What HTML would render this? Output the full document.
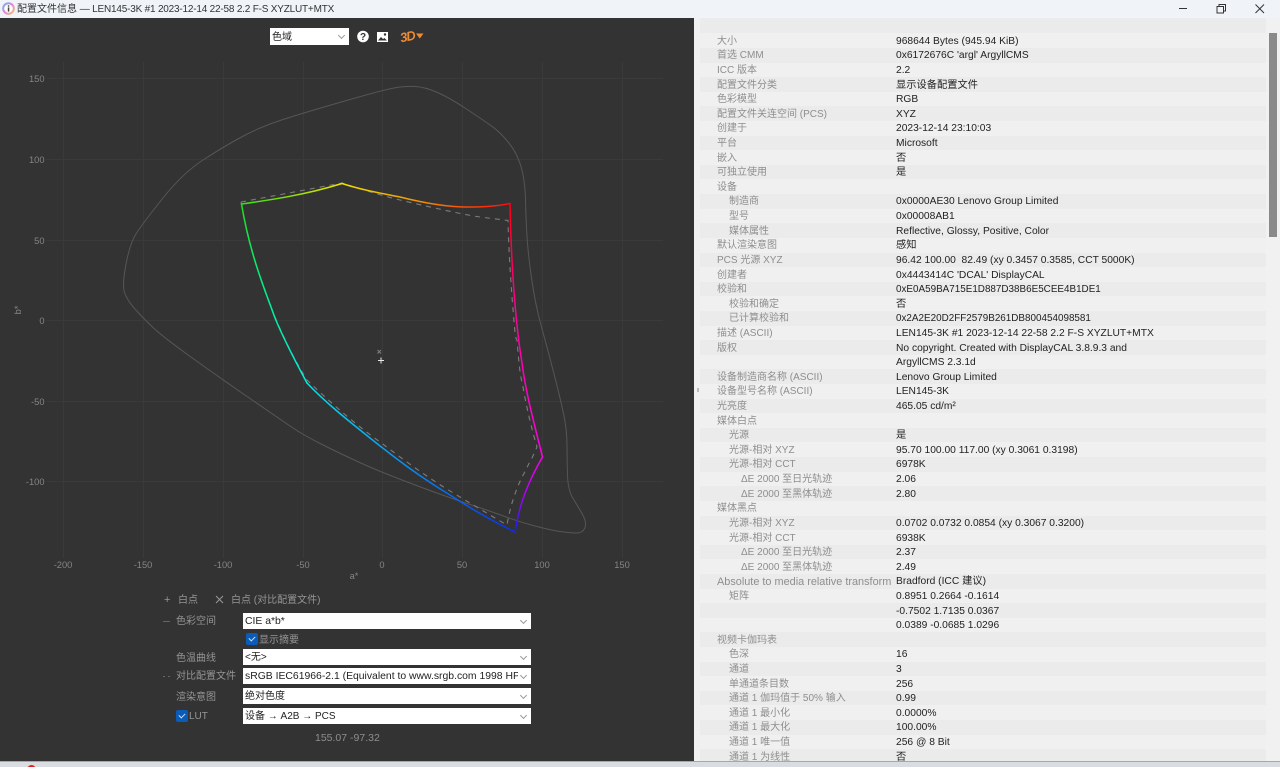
<!DOCTYPE html>
<html lang="zh">
<head>
<meta charset="utf-8">
<title>配置文件信息</title>
<style>
html,body{margin:0;padding:0;width:1280px;height:767px;overflow:hidden}
body{position:relative;background:#f1f1f1;font-family:"Liberation Sans","Noto Sans CJK SC",sans-serif;font-size:10px}
.a{position:absolute;white-space:nowrap}
#title{left:0;top:0;width:1280px;height:18px;background:#f0f4f9}
#left{left:0;top:18px;width:694px;height:743px;background:#333}
#task{left:0;top:761px;width:1280px;height:6px;background:#d9dde2;border-top:1px solid #a8a8a8;box-sizing:border-box;overflow:hidden}
#rows{position:absolute;left:700px;top:33.4px;width:566px}
.r{height:14.62px;line-height:14.62px;position:relative;white-space:nowrap}
.r:nth-child(even){background:#ebebeb}
.r:nth-child(odd){background:#f0f0f0}
.r b{font-weight:normal;position:absolute;left:17px;top:1.4px;color:#8e8e8e;font-size:10px}
.r b.i1{left:29px}
.r b.i2{left:41px}
.r i{font-style:normal;position:absolute;left:196px;top:1.4px;color:#222;font-size:10.25px}
.s{background:#fff;color:#222;height:16px;line-height:17px;left:243px;width:288px;padding-left:2px;box-sizing:border-box;overflow:hidden;font-size:10.4px}
.s:after{content:"";position:absolute;right:5px;top:5px;width:4px;height:4px;border-right:1px solid #999;border-bottom:1px solid #999;transform:rotate(45deg)}
.s span{position:absolute;left:2px;right:13px;top:0;overflow:hidden}
.z{font-size:10px}
.s.z{line-height:18px}
.l{color:#959595;line-height:14px;font-size:10px}
.c{width:12px;height:12px;background:#0a5cb8;border-radius:2px}
.c:after{content:"";position:absolute;left:3px;top:2.500px;width:5px;height:3px;border-left:1px solid #cfe2f8;border-bottom:1px solid #cfe2f8;transform:rotate(-45deg)}
</style>
</head>
<body>
<div class="a" id="title"></div>
<svg class="a" style="left:2px;top:2px" width="13" height="13" viewBox="0 0 13 13">
<defs><linearGradient id="ic" x1="0" y1="0" x2="1" y2="1"><stop offset="0" stop-color="#5fb8f0"/><stop offset=".5" stop-color="#e884d0"/><stop offset="1" stop-color="#f0d060"/></linearGradient></defs>
<circle cx="6.5" cy="6.5" r="6.3" fill="url(#ic)"/><circle cx="6.5" cy="6.5" r="4.3" fill="#fff"/>
<rect x="5.8" y="5.4" width="1.5" height="4.2" fill="#444"/><rect x="5.8" y="3.3" width="1.5" height="1.4" fill="#444"/></svg>
<div class="a" style="left:17px;top:2px;line-height:15px;color:#333;font-size:10px">配置文件信息 <span style="letter-spacing:-.2px">— LEN145-3K #1 2023-12-14 22-58 2.2 F-S XYZLUT+MTX</span></div>
<svg class="a" style="left:1176px;top:0" width="104" height="18" viewBox="0 0 104 18" fill="none" stroke="#333" stroke-width="1">
<path d="M3 8.500h8"/><path d="M41 6.500h6.500v6.500H41z"/><path d="M43 6.500V4.500h6.500V11h-2"/><path d="M79.500 4.500l8.500 8.500M88 4.500l-8.500 8.500"/></svg>

<div class="a" id="left"></div>

<svg class="a" style="left:0;top:18px" width="694" height="600" viewBox="0 18 694 600" font-family="Liberation Sans" font-size="9.3" fill="#858585">
<defs>
<linearGradient id="g1" gradientUnits="userSpaceOnUse" x1="241" y1="204" x2="342" y2="183"><stop offset="0" stop-color="#30e010"/><stop offset="1" stop-color="#f0e000"/></linearGradient>
<linearGradient id="g2" gradientUnits="userSpaceOnUse" x1="342" y1="183" x2="510" y2="204"><stop offset="0" stop-color="#f0e000"/><stop offset=".4" stop-color="#f0a000"/><stop offset="1" stop-color="#ff0a10"/></linearGradient>
<linearGradient id="g3" gradientUnits="userSpaceOnUse" x1="510" y1="204" x2="542" y2="457"><stop offset="0" stop-color="#ff0010"/><stop offset=".4" stop-color="#ff0090"/><stop offset="1" stop-color="#ff00e8"/></linearGradient>
<linearGradient id="g4" gradientUnits="userSpaceOnUse" x1="542" y1="457" x2="514" y2="532"><stop offset="0" stop-color="#ff00e8"/><stop offset=".55" stop-color="#a800ff"/><stop offset="1" stop-color="#1020f0"/></linearGradient>
<linearGradient id="g5" gradientUnits="userSpaceOnUse" x1="514" y1="532" x2="305" y2="382"><stop offset="0" stop-color="#0830f0"/><stop offset=".5" stop-color="#0890f0"/><stop offset="1" stop-color="#00e8f0"/></linearGradient>
<linearGradient id="g6" gradientUnits="userSpaceOnUse" x1="305" y1="382" x2="241" y2="204"><stop offset="0" stop-color="#00f0e0"/><stop offset=".5" stop-color="#00f090"/><stop offset="1" stop-color="#20e020"/></linearGradient>
</defs>
<g stroke="#3a3a3a" stroke-width="1" fill="none">
<path d="M63.500 62V558M143.500 62V558M223.500 62V558M303.500 62V558M382.500 62V558M462.500 62V558M542.500 62V558M622.500 62V558"/>
<path d="M46 78.500H663M46 159.500H663M46 240.500H663M46 320.500H663M46 401.500H663M46 481.500H663"/>
</g>
<g text-anchor="end">
<text x="44.500" y="82">150</text><text x="44.500" y="163">100</text><text x="44.500" y="244">50</text><text x="44.500" y="324">0</text><text x="44.500" y="405">-50</text><text x="44.500" y="485">-100</text>
</g>
<g text-anchor="middle">
<text x="63" y="568">-200</text><text x="143" y="568">-150</text><text x="223" y="568">-100</text><text x="303" y="568">-50</text><text x="382" y="568">0</text><text x="462" y="568">50</text><text x="542" y="568">100</text><text x="622" y="568">150</text>
<text x="354" y="579">a*</text>
<text transform="translate(21 310) rotate(-90)">b*</text>
</g>
<path fill="none" stroke="#565656" stroke-width="1" d="M124.500 292.500Q122 285 126 264Q130 243 136.500 233Q143 223 163 198Q183 173 203 160Q223 147 241.500 137Q260 127 281.500 120Q303 113 343 101.500Q383 90 394 88Q405 86 415 86.500Q425 87 437.500 92.500Q450 98 466.500 109Q483 120 491.500 126Q500 132 508.500 142.500Q517 153 521 166.500Q525 180 525.500 200Q526 220 527 236.500Q528 253 531.500 278Q535 303 541 325Q547 347 553.500 372Q560 397 563.500 413.500Q567 430 567 445Q567 460 567.500 475Q568 490 572.500 497.500Q577 505 582 513.500Q587 522 585 527.500Q583 533 576.500 533Q570 533 560 531.500Q550 530 535 526Q520 522 503.500 516Q487 510 468.500 504Q450 498 416.500 485.500Q383 473 363 464Q343 455 323 445Q303 435 290 426Q277 417 250 398.500Q223 380 193 358.500Q163 337 153 327.500Q143 318 135 309Q127 300 124.500 292.500Z"/>
<path fill="none" stroke="#7c7c7c" stroke-width="1.100" stroke-dasharray="5 5" d="M241 202L342 183C360 189 380 195 400 200C425 206 465 215 480 217L508 220.500C508.500 240 509 255 512 297C514 320 515 340 517 340C519 365 520 375 523 387C527 410 532 430 537 447L532 458C528 465 525 472 522 477C515 492 510 507 507 525C500 521 495 518 490 515C475 506 458 496 442 486C420 472 400 457 380 442C355 424 333 405 307 380C285 345 255 280 241 202"/>
<g fill="none" stroke-width="1.500" stroke-linecap="round" stroke-linejoin="round">
<path stroke="url(#g1)" d="M241.500 204C270 200 305 195 342 183.500"/>
<path stroke="url(#g2)" d="M342 183.500C362 190 380 193 400 197C420 202 445 207 467 207C485 207 498 206 510 203.500"/>
<path stroke="url(#g3)" d="M510 203.500C511 260 515 320 522 363C526 395 536 430 542.500 457"/>
<path stroke="url(#g4)" d="M542.500 457C528 482 519 505 515 532"/>
<path stroke="url(#g5)" d="M515 532C490 520 470 508 450 495C420 477 395 458 370 438C345 418 325 402 307 383"/>
<path stroke="url(#g6)" d="M307 383C293 357 282 335 275 318C265 290 250 255 241.500 204"/>
</g>
<path d="M381 357.500v6M378 360.500h6" stroke="#e8e8e8" stroke-width="1" fill="none"/>
<path d="M377.500 350l3.500 3.500M381 350l-3.500 3.500" stroke="#808080" stroke-width="1" fill="none"/>
</svg>

<div class="a s" style="left:270px;top:28px;width:79px;height:17px;line-height:19px;font-size:10px">色域</div>
<svg class="a" style="left:356px;top:30px" width="14" height="14" viewBox="0 0 14 14"><circle cx="7" cy="6.500" r="5.800" fill="#fff"/><text x="7" y="10" font-family="Liberation Sans" font-size="10" font-weight="bold" text-anchor="middle" fill="#333">?</text></svg>
<svg class="a" style="left:376px;top:30px" width="13" height="13" viewBox="0 0 13 13"><rect x="1" y="2" width="11" height="10" fill="#fff"/><path d="M2 10.500l3-3.500 2 2 1.500-1 2.500 2.500z" fill="#333"/><circle cx="9" cy="4.500" r="1.200" fill="#333"/></svg>
<div class="a" style="left:400px;top:29px;color:#f08a30;font:italic bold 13px/15px 'Liberation Sans',sans-serif;letter-spacing:-1px;transform:rotate(-12deg)">3D</div>
<svg class="a" style="left:415px;top:33px" width="10" height="6" viewBox="0 0 10 6"><path d="M1 0.500h7.500L4.800 5.500z" fill="#f08a30"/></svg>

<div class="a l" style="left:164px;top:593px;font-size:11px">+</div>
<div class="a l" style="left:178px;top:594px">白点</div>
<svg class="a" style="left:215px;top:595px" width="9" height="9" viewBox="0 0 9 9"><path d="M1 1l7 7M8 1l-7 7" stroke="#999" fill="none"/></svg>
<div class="a l" style="left:231px;top:594px">白点 (对比配置文件)</div>

<div class="a" style="left:163px;top:621px;width:7px;height:1px;background:#666"></div>
<div class="a l" style="left:176px;top:615px">色彩空间</div>
<div class="a s" style="top:613px">CIE a*b*</div>
<div class="a c" style="left:246px;top:633px"></div>
<div class="a l" style="left:259px;top:634px">显示摘要</div>
<div class="a l" style="left:176px;top:652px">色温曲线</div>
<div class="a s z" style="top:649px">&lt;无&gt;</div>
<div class="a" style="left:163px;top:676px;width:2px;height:1px;background:#666"></div>
<div class="a" style="left:168px;top:676px;width:2px;height:1px;background:#666"></div>
<div class="a l" style="left:176px;top:670px">对比配置文件</div>
<div class="a s" style="top:668px"><span>sRGB IEC61966-2.1 (Equivalent to www.srgb.com 1998 HP sRGB)</span></div>
<div class="a l" style="left:176px;top:691px">渲染意图</div>
<div class="a s z" style="top:688px">绝对色度</div>
<div class="a c" style="left:176px;top:710px"></div>
<div class="a l" style="left:189px;top:710px">LUT</div>
<div class="a s z" style="top:708px">设备 → A2B → PCS</div>
<div class="a" style="left:315px;top:731px;color:#8e8e8e;line-height:14px;font-size:10.500px">155.07 -97.32</div>

<div class="a" style="left:700px;top:18px;width:566px;height:15.400px;background:#ebebeb"></div>
<div id="rows">
<div class="r"><b>大小</b><i>968644 Bytes (945.94 KiB)</i></div>
<div class="r"><b>首选 CMM</b><i>0x6172676C 'argl' ArgyllCMS</i></div>
<div class="r"><b>ICC 版本</b><i>2.2</i></div>
<div class="r"><b>配置文件分类</b><i class="z">显示设备配置文件</i></div>
<div class="r"><b>色彩模型</b><i>RGB</i></div>
<div class="r"><b>配置文件关连空间 (PCS)</b><i>XYZ</i></div>
<div class="r"><b>创建于</b><i>2023-12-14 23:10:03</i></div>
<div class="r"><b>平台</b><i>Microsoft</i></div>
<div class="r"><b>嵌入</b><i>否</i></div>
<div class="r"><b>可独立使用</b><i>是</i></div>
<div class="r"><b>设备</b></div>
<div class="r"><b class="i1">制造商</b><i>0x0000AE30 Lenovo Group Limited</i></div>
<div class="r"><b class="i1">型号</b><i>0x00008AB1</i></div>
<div class="r"><b class="i1">媒体属性</b><i>Reflective, Glossy, Positive, Color</i></div>
<div class="r"><b>默认渲染意图</b><i>感知</i></div>
<div class="r"><b>PCS 光源 XYZ</b><i>96.42 100.00 &nbsp;82.49 (xy 0.3457 0.3585, CCT 5000K)</i></div>
<div class="r"><b>创建者</b><i>0x4443414C 'DCAL' DisplayCAL</i></div>
<div class="r"><b>校验和</b><i style="font-size:9.900px">0xE0A59BA715E1D887D38B6E5CEE4B1DE1</i></div>
<div class="r"><b class="i1">校验和确定</b><i>否</i></div>
<div class="r"><b class="i1">已计算校验和</b><i style="font-size:9.900px">0x2A2E20D2FF2579B261DB800454098581</i></div>
<div class="r"><b>描述 (ASCII)</b><i>LEN145-3K #1 2023-12-14 22-58 2.2 F-S XYZLUT+MTX</i></div>
<div class="r"><b>版权</b><i>No copyright. Created with DisplayCAL 3.8.9.3 and</i></div>
<div class="r"><i>ArgyllCMS 2.3.1d</i></div>
<div class="r"><b>设备制造商名称 (ASCII)</b><i>Lenovo Group Limited</i></div>
<div class="r"><b>设备型号名称 (ASCII)</b><i>LEN145-3K</i></div>
<div class="r"><b>光亮度</b><i>465.05 cd/m²</i></div>
<div class="r"><b>媒体白点</b></div>
<div class="r"><b class="i1">光源</b><i>是</i></div>
<div class="r"><b class="i1">光源-相对 XYZ</b><i>95.70 100.00 117.00 (xy 0.3061 0.3198)</i></div>
<div class="r"><b class="i1">光源-相对 CCT</b><i>6978K</i></div>
<div class="r"><b class="i2">ΔE 2000 至日光轨迹</b><i>2.06</i></div>
<div class="r"><b class="i2">ΔE 2000 至黑体轨迹</b><i>2.80</i></div>
<div class="r"><b>媒体黑点</b></div>
<div class="r"><b class="i1">光源-相对 XYZ</b><i>0.0702 0.0732 0.0854 (xy 0.3067 0.3200)</i></div>
<div class="r"><b class="i1">光源-相对 CCT</b><i>6938K</i></div>
<div class="r"><b class="i2">ΔE 2000 至日光轨迹</b><i>2.37</i></div>
<div class="r"><b class="i2">ΔE 2000 至黑体轨迹</b><i>2.49</i></div>
<div class="r"><b style="font-size:10.900px">Absolute to media relative transform</b><i>Bradford (ICC 建议)</i></div>
<div class="r"><b class="i1">矩阵</b><i>0.8951 0.2664 -0.1614</i></div>
<div class="r"><i>-0.7502 1.7135 0.0367</i></div>
<div class="r"><i>0.0389 -0.0685 1.0296</i></div>
<div class="r"><b>视频卡伽玛表</b></div>
<div class="r"><b class="i1">色深</b><i>16</i></div>
<div class="r"><b class="i1">通道</b><i>3</i></div>
<div class="r"><b class="i1">单通道条目数</b><i>256</i></div>
<div class="r"><b class="i1">通道 1 伽玛值于 50% 输入</b><i>0.99</i></div>
<div class="r"><b class="i1">通道 1 最小化</b><i>0.0000%</i></div>
<div class="r"><b class="i1">通道 1 最大化</b><i>100.00%</i></div>
<div class="r"><b class="i1">通道 1 唯一值</b><i>256 @ 8 Bit</i></div>
<div class="r"><b class="i1">通道 1 为线性</b><i>否</i></div>
</div>

<div class="a" style="left:697px;top:388px;width:2px;height:4px;background:#bbb"></div>
<div class="a" style="left:1269px;top:33px;width:8px;height:204px;background:#8a8a8a"></div>
<div class="a" id="task"><div class="a" style="left:27px;top:3px;width:9px;height:9px;border-radius:5px;background:#d82020"></div></div>
</body>
</html>
